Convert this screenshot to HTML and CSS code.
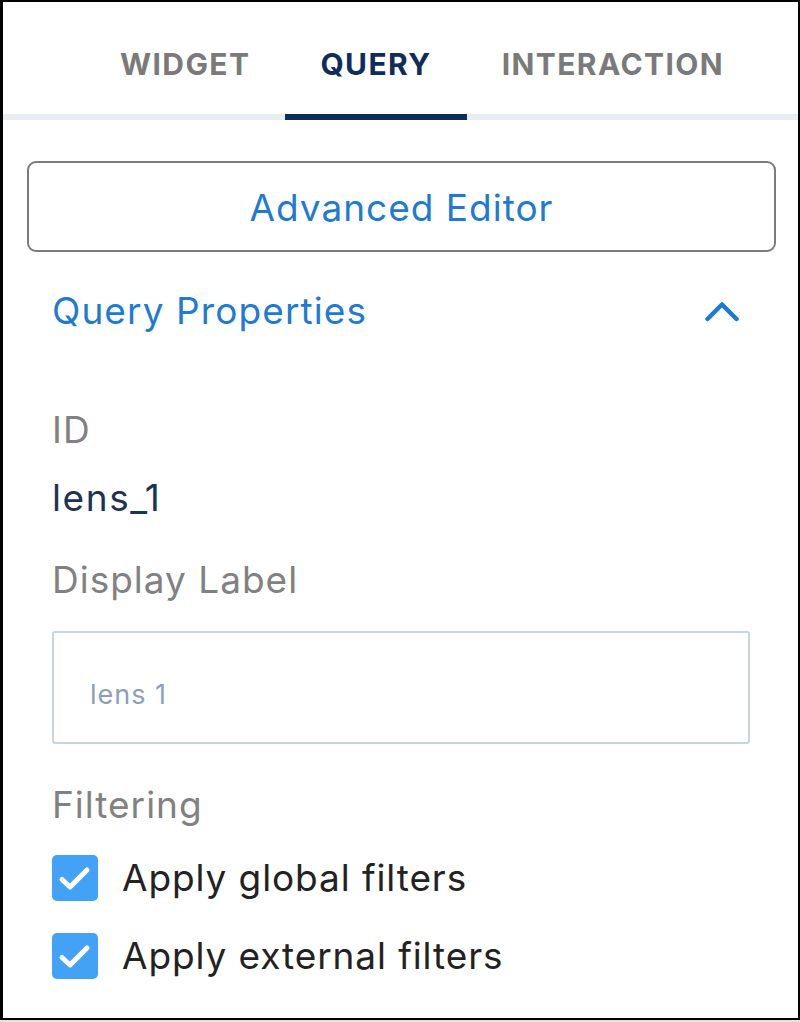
FILE: index.html
```html
<!DOCTYPE html>
<html>
<head>
<meta charset="utf-8">
<link rel="stylesheet" href="styles.css">
</head>
<body>
<div class="panel">
  <nav class="tabs">
    <a class="tab">WIDGET</a>
    <a class="tab active">QUERY</a>
    <a class="tab">INTERACTION</a>
  </nav>
  <div class="content">
    <button class="adv-btn">Advanced Editor</button>
    <section class="props">
      <header class="props-head">
        <span class="props-title">Query Properties</span>
        <svg class="chev" width="34" height="22" viewBox="0 0 34 22"><path d="M2.5 19 L17 4.5 L31.5 19" fill="none" stroke="#1b7ad5" stroke-width="4.5" stroke-linecap="round" stroke-linejoin="round"/></svg>
      </header>
      <div class="label label-id">ID</div>
      <div class="value">lens_1</div>
      <div class="label label-display">Display Label</div>
      <input class="text-input" type="text" placeholder="lens 1">
      <div class="label label-filter">Filtering</div>
      <label class="check">
        <span class="box"><svg width="46" height="46" viewBox="0 0 46 46"><path d="M10 24.5 L18 32 L35 15" fill="none" stroke="#fff" stroke-width="5" stroke-linecap="round" stroke-linejoin="round"/></svg></span>
        <span class="check-text">Apply global filters</span>
      </label>
      <label class="check">
        <span class="box"><svg width="46" height="46" viewBox="0 0 46 46"><path d="M10 24.5 L18 32 L35 15" fill="none" stroke="#fff" stroke-width="5" stroke-linecap="round" stroke-linejoin="round"/></svg></span>
        <span class="check-text">Apply external filters</span>
      </label>
    </section>
  </div>
</div>
</body>
</html>
```
FILE: styles.css
```css
html, body {
  margin: 0;
  padding: 0;
}
body {
  background: #e4e4e4;
  font-family: "Inter", "Noto Sans", sans-serif;
}
.panel {
  box-sizing: border-box;
  width: 800px;
  height: 1020px;
  background: #fff;
  border: 2px solid #000;
  border-left-width: 3px;
}
.tabs {
  display: flex;
  padding-left: 82px;
  border-bottom: 6px solid #e8edf3;
  height: 112px;
}
.tab {
  display: block;
  padding: 42px 35px 0 35px;
  font-size: 30px;
  line-height: 40px;
  font-weight: 700;
  letter-spacing: 1.4px;
  color: #7a7a7a;
  height: 112px;
  box-sizing: border-box;
}
.tab.active {
  color: #0f2d5a;
  border-bottom: 6px solid #0c2d5e;
  height: 118px;
}
.content {
  padding: 41px 22px 0 24px;
}
.adv-btn {
  display: block;
  width: 100%;
  height: 91px;
  box-sizing: border-box;
  background: #fff;
  border: 2px solid #7b7b7b;
  border-radius: 9px;
  font-family: "Inter", "Noto Sans", sans-serif;
  font-size: 37px;
  letter-spacing: 1px;
  color: #1f7ad3;
  padding: 2px 0 0 0;
}
.props {
  padding: 0 26px 0 25px;
}
.props-head {
  display: flex;
  align-items: center;
  justify-content: space-between;
  margin-top: 37px;
  height: 44px;
  padding-right: 11px;
}
.props-title {
  font-size: 37px;
  line-height: 44px;
  letter-spacing: 1.1px;
  color: #1f7ad3;
}
.chev {
  display: block;
}
.label {
  font-size: 37px;
  line-height: 44px;
  letter-spacing: 1px;
  color: #818181;
}
.label-id {
  margin-top: 75px;
}
.value {
  margin-top: 24px;
  font-size: 37px;
  line-height: 44px;
  letter-spacing: 1.6px;
  color: #1d3354;
}
.label-display {
  margin-top: 38px;
}
.text-input {
  display: block;
  box-sizing: border-box;
  width: 100%;
  height: 113px;
  margin-top: 29px;
  border: 2px solid #c6d4e4;
  border-radius: 3px;
  padding: 14px 0 0 36px;
  font-family: "Inter", "Noto Sans", sans-serif;
  font-size: 27px;
  letter-spacing: 1px;
  color: #1d3354;
  outline: none;
}
.text-input::placeholder {
  color: #8aa0ba;
}
.label-filter {
  margin-top: 39px;
}
.check {
  display: flex;
  align-items: center;
  gap: 24px;
  margin-top: 28px;
}
.check + .check {
  margin-top: 32px;
}
.box {
  width: 46px;
  height: 46px;
  border-radius: 5px;
  background: #43a2f5;
  flex: none;
}
.box svg {
  display: block;
}
.check-text {
  font-size: 37px;
  line-height: 44px;
  letter-spacing: 0.9px;
  color: #222;
}
```
